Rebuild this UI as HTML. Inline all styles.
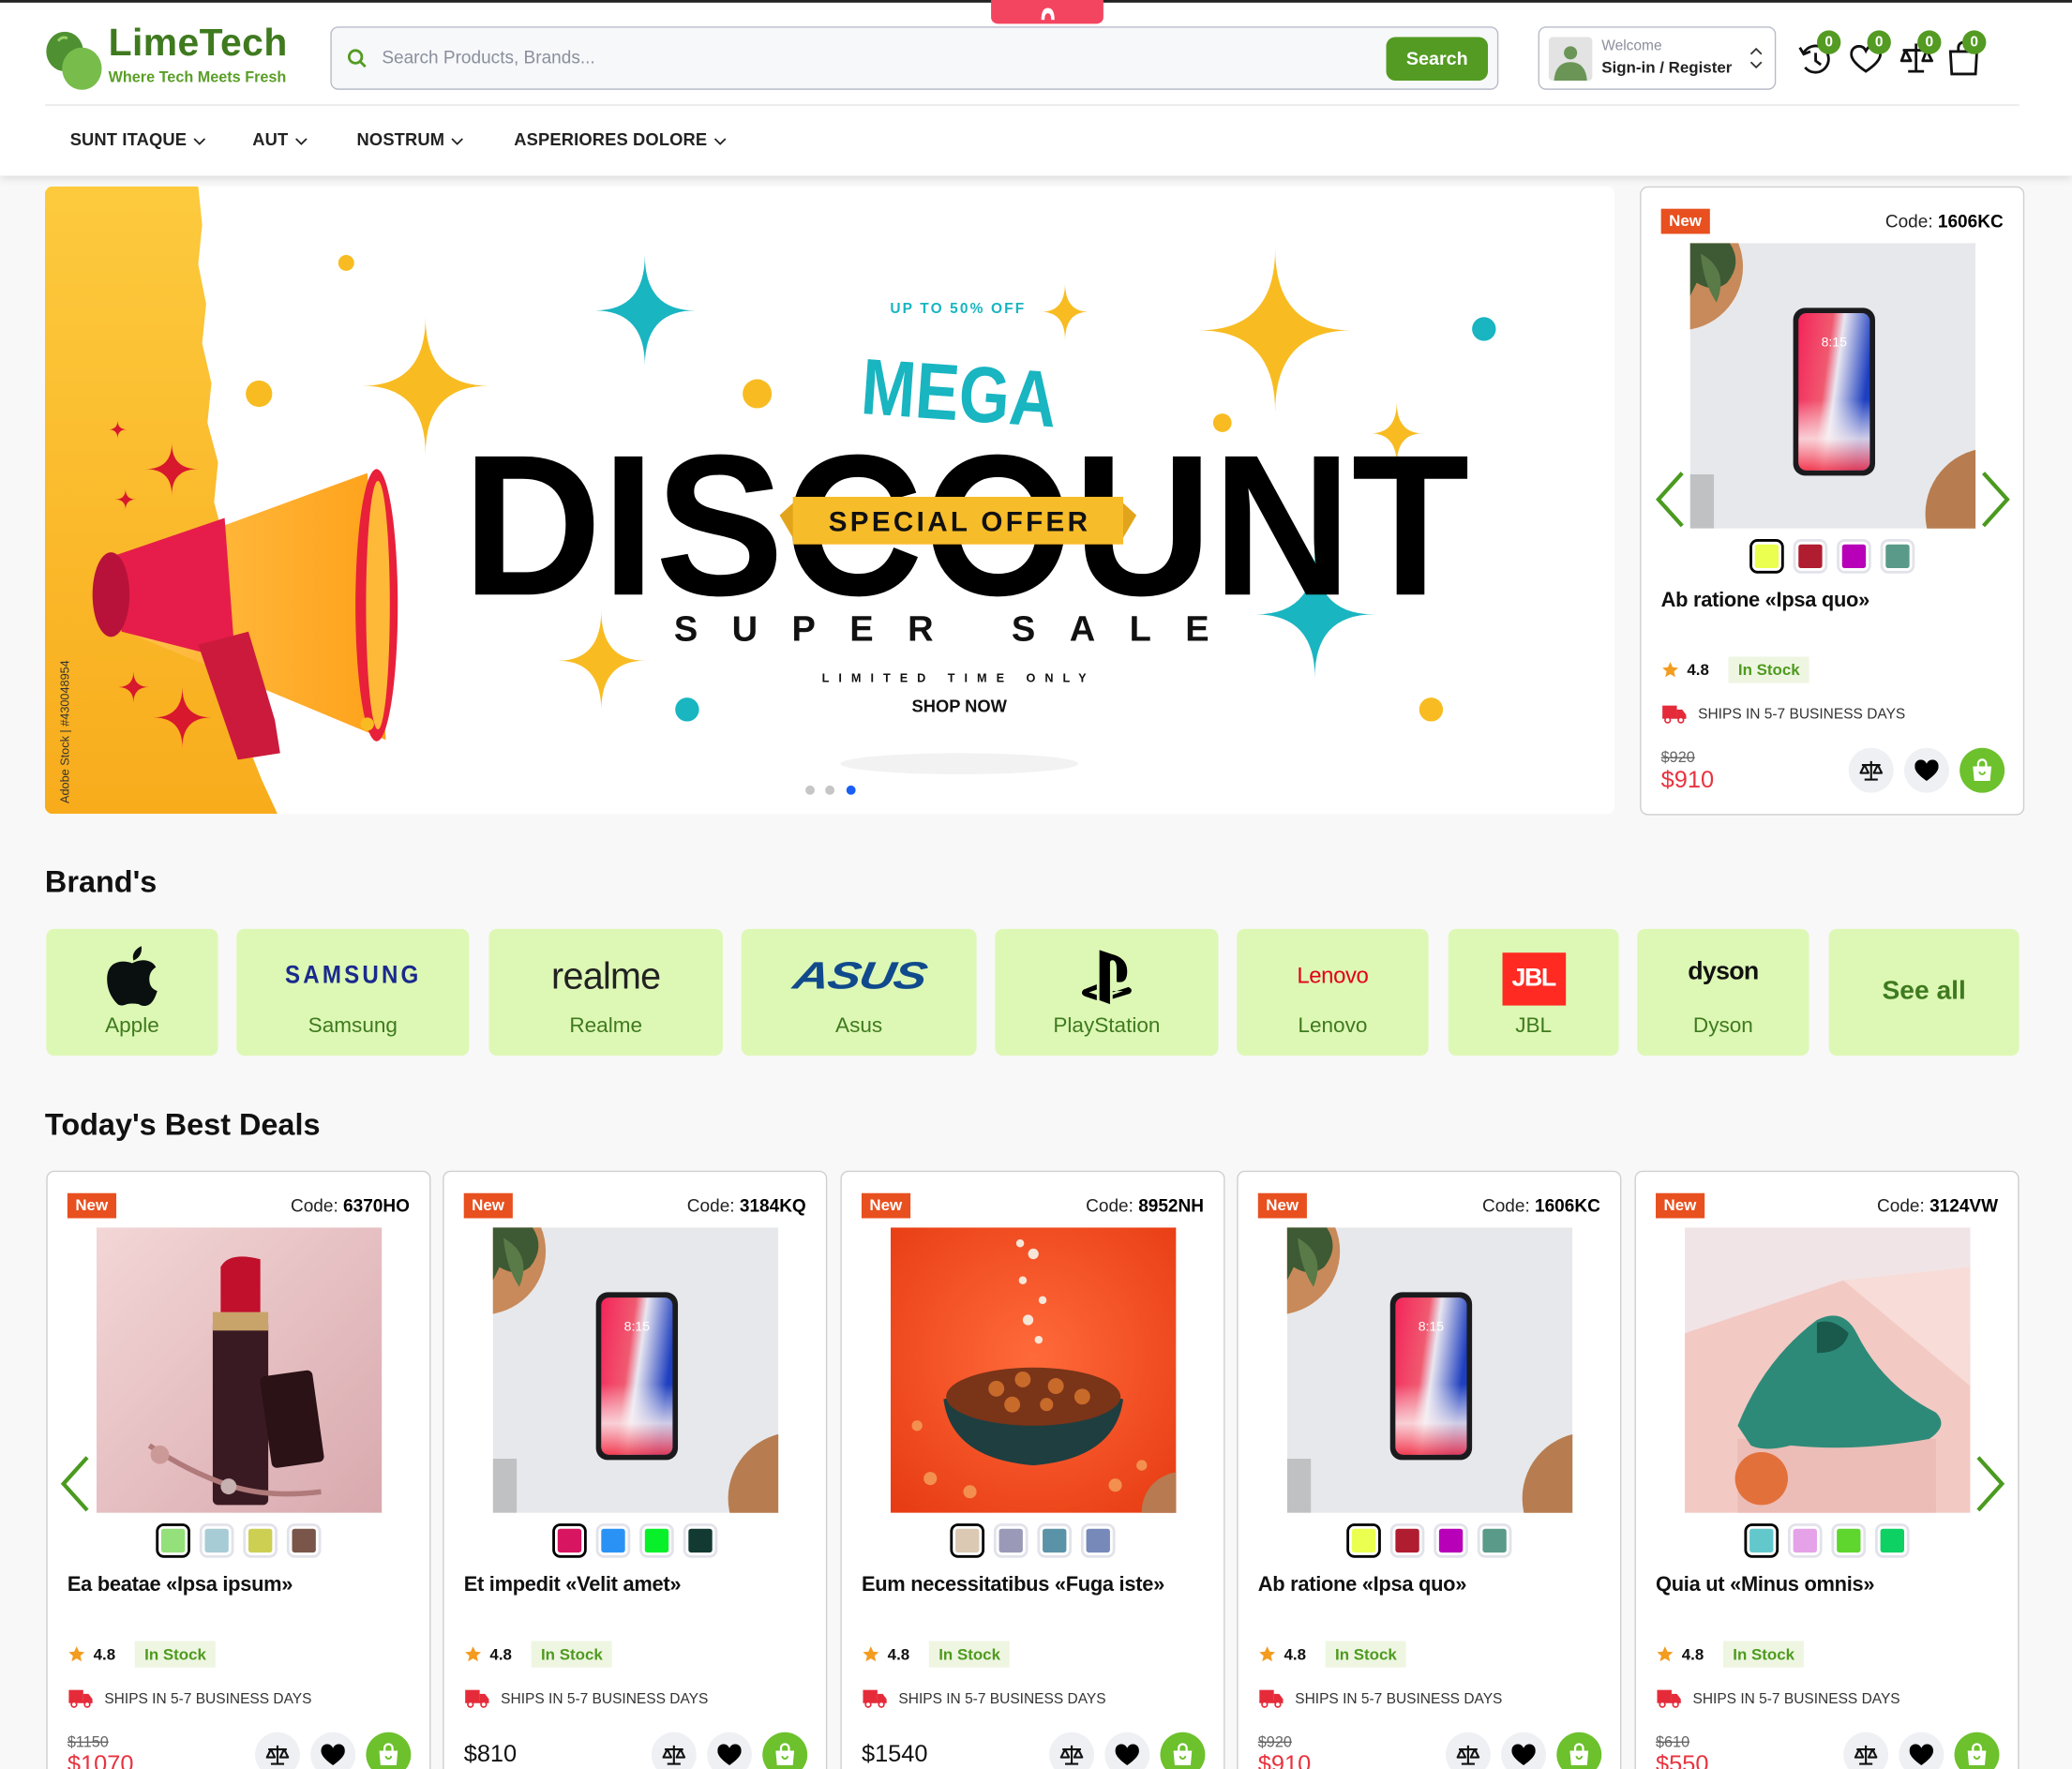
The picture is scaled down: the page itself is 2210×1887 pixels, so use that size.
<!DOCTYPE html>
<html><head><meta charset="utf-8">
<style>
*{margin:0;padding:0;box-sizing:border-box}
html,body{width:2210px;height:1886px;overflow:hidden;background:#f8f8f8;font-family:"Liberation Sans",sans-serif;color:#111}
#w{position:absolute;left:0;top:0;width:1568px;height:1339px;transform:scale(1.409439);transform-origin:0 0;overflow:hidden}
.a{position:absolute}
.nav{position:absolute;top:98px;font-size:13px;font-weight:bold;color:#222;letter-spacing:.1px}
.nav svg{margin-left:5px;vertical-align:middle}
.badge{position:absolute;width:18px;height:18px;border-radius:9px;background:#539b22;color:#fff;font-size:11px;font-weight:bold;text-align:center;line-height:18px}
.brand{position:absolute;top:703px;height:96px;background:#ddf8b5;border-radius:6px}
.brand .lb{position:absolute;left:0;right:0;top:65px;text-align:center;font-size:16px;color:#3f7a1f}
.brand .lg{position:absolute;left:0;right:0;top:14px;height:44px;display:flex;align-items:center;justify-content:center}
.card{position:absolute;background:#fff;border:1px solid #cfcfcf;border-radius:6px;width:291px;height:476px}
.new{position:absolute;left:15px;top:16px;background:#e8501f;color:#fff;font-size:12px;font-weight:bold;height:19px;line-height:19px;padding:0 6px}
.code{position:absolute;right:15px;top:16px;font-size:13.5px;line-height:19px;color:#222}
.code b{color:#000}
.img{position:absolute;left:37px;top:42px;width:216px;height:216px;overflow:hidden}
.sw{position:absolute;top:266px;left:82px;display:flex;gap:7px}
.sw span{width:26px;height:26px;border:2px solid #e2e3ea;border-radius:6px;padding:2px;background-clip:content-box}
.sw span.s{border-color:#000}
.tt{position:absolute;left:15px;top:304px;font-size:15.5px;font-weight:bold;color:#111;letter-spacing:-.2px}
.rt{position:absolute;left:16px;top:355px;display:flex;align-items:center;font-size:12px;font-weight:bold}
.rt .st{margin-left:8px;margin-left:15px;background:#eef6e2;color:#4f9a1e;padding:3px 7px}
.sh{position:absolute;left:16px;top:391px;display:flex;align-items:center;font-size:11px;color:#333}
.sh svg{margin-right:9px}
.po{position:absolute;left:15px;top:426px;font-size:11.5px;color:#666;text-decoration:line-through}
.pn{position:absolute;left:15px;top:438px;font-size:18px;color:#e8333f}
.pb{position:absolute;left:15px;top:430px;font-size:18px;color:#111}
.bt{position:absolute;top:424px;width:34px;height:34px;border-radius:17px;background:#eef0f3;display:flex;align-items:center;justify-content:center}
.bt.g{background:#6cc12c}
.arr{position:absolute}
</style></head><body>
<svg width="0" height="0" style="position:absolute">
<defs>
<linearGradient id="scr" x1="0" y1="0" x2="1" y2="0.3"><stop offset="0" stop-color="#f4245a"/><stop offset="0.45" stop-color="#f05a70"/><stop offset="0.6" stop-color="#e9e6f0"/><stop offset="1" stop-color="#1e3fbf"/></linearGradient>
<linearGradient id="scr2" x1="0" y1="0" x2="0" y2="1"><stop offset="0" stop-color="#fff" stop-opacity="0"/><stop offset="0.55" stop-color="#fff" stop-opacity=".0"/><stop offset="0.8" stop-color="#fbeff0" stop-opacity=".8"/><stop offset="1" stop-color="#f23a50" stop-opacity=".9"/></linearGradient>
<linearGradient id="ylw" x1="0" y1="0" x2="0" y2="1"><stop offset="0" stop-color="#fdca3e"/><stop offset="1" stop-color="#f8ac1c"/></linearGradient>
<linearGradient id="horn" x1="0" y1="0" x2="1" y2="0"><stop offset="0" stop-color="#ffc24a"/><stop offset="1" stop-color="#ffa11a"/></linearGradient>
<linearGradient id="lip" x1="0" y1="0" x2="1" y2="1"><stop offset="0" stop-color="#f3d6d6"/><stop offset="1" stop-color="#d8a9ae"/></linearGradient>
<radialGradient id="cer" cx="0.5" cy="0.45" r="0.7"><stop offset="0" stop-color="#ff6a3a"/><stop offset="1" stop-color="#e83d14"/></radialGradient>
<g id="phone">
<rect width="216" height="216" fill="#e7e8eb"/>
<circle cx="-8" cy="18" r="48" fill="#c88a5a"/>
<path d="M0 0 L30 0 Q40 15 28 30 Q18 38 5 30 L0 40Z" fill="#3d5a34"/>
<path d="M8 8 Q30 20 20 45 Q10 30 8 8Z" fill="#5a7a48"/>
<circle cx="228" cy="205" r="50" fill="#b77d50"/>
<rect x="0" y="175" width="18" height="41" fill="#9a9a9c" opacity=".5"/>
<rect x="78" y="49" width="62" height="127" rx="9" fill="#1b1b1e"/>
<rect x="82" y="53" width="54" height="119" rx="6" fill="url(#scr)"/>
<rect x="82" y="53" width="54" height="119" rx="6" fill="url(#scr2)"/>
<text x="109" y="78" font-size="10" fill="#fff" text-anchor="middle" font-family="Liberation Sans">8:15</text>
</g>
<g id="scale"><path d="M9 2v14M4 16h10M2 5h14M4 5l-3 6h6zM14 5l-3 6h6z" fill="none" stroke="#111" stroke-width="1.5" stroke-linejoin="round"/></g>
<g id="hrt"><path d="M9 16 C2 11 0 8 0 5 C0 2 2 0 4.5 0 C6.5 0 8 1 9 3 C10 1 11.5 0 13.5 0 C16 0 18 2 18 5 C18 8 16 11 9 16Z" fill="#000"/></g>
<g id="bag"><path d="M1 6h14l-1 11H2z" fill="#fff"/><path d="M5 6V4a3 3 0 0 1 6 0v2" stroke="#fff" stroke-width="1.6" fill="none"/><path d="M6 10a2 2 0 0 0 4 0" stroke="#6cc12c" stroke-width="1.4" fill="none"/></g>
<g id="truck"><rect x="0" y="1" width="11" height="9" fill="#e52b3a"/><path d="M11 4h4l3 4v3h-7z" fill="#e52b3a"/><rect x="0" y="9" width="18" height="2" fill="#e52b3a"/><circle cx="4" cy="12" r="2" fill="#fff" stroke="#e52b3a" stroke-width="1.2"/><circle cx="14" cy="12" r="2" fill="#fff" stroke="#e52b3a" stroke-width="1.2"/></g>
<g id="star"><path d="M6 0l1.8 4 4.2.4-3.2 2.8 1 4.2L6 9.2 2.2 11.4l1-4.2L0 4.4 4.2 4z" fill="#f39c1f"/></g>
</defs></svg>

<div id="w">
<!-- header -->
<div class="a" style="left:0;top:0;width:1568px;height:133px;background:#fff;box-shadow:0 2px 6px rgba(0,0,0,.12)"></div>
<div class="a" style="left:0;top:0;width:1568px;height:2px;background:#222"></div>
<div class="a" style="left:750px;top:0;width:85px;height:18px;background:#f44560;border-radius:0 0 5px 5px"></div>
<svg class="a" style="left:786px;top:4px" width="14" height="12"><path d="M2 11 Q2 2 7 2 Q12 2 12 11 L9.5 11 Q9.5 6 7 6 Q4.5 6 4.5 11Z" fill="#fff"/></svg>

<svg class="a" style="left:33px;top:22px" width="46" height="46">
<ellipse cx="16" cy="17" rx="14" ry="15" fill="#4f9132"/>
<ellipse cx="29" cy="30" rx="15" ry="16" fill="#78bc4c"/>
<path d="M11 9 Q14 5 18 7" stroke="#9ad36a" stroke-width="2" fill="none"/>
</svg>
<div class="a" style="left:82px;top:17px;font-size:29px;font-weight:bold;color:#3f7a1f;letter-spacing:.3px">LimeTech</div>
<div class="a" style="left:82px;top:53px;font-size:11.5px;color:#5a9e27;font-weight:bold">Where Tech Meets Fresh</div>

<div class="a" style="left:250px;top:20px;width:884px;height:48px;border:1px solid #b9bcc9;border-radius:6px;background:#f7f8fa"></div>
<svg class="a" style="left:263px;top:37px" width="15" height="15"><circle cx="6" cy="6" r="4.8" stroke="#539b22" stroke-width="2" fill="none"/><path d="M9.5 9.5l4 4" stroke="#539b22" stroke-width="2"/></svg>
<div class="a" style="left:289px;top:36px;font-size:13.5px;color:#8a8f9c">Search Products, Brands...</div>
<div class="a" style="left:1049px;top:28px;width:77px;height:33px;background:#539b22;border-radius:7px;color:#fff;font-size:14px;font-weight:bold;text-align:center;line-height:33px">Search</div>

<div class="a" style="left:1164px;top:20px;width:180px;height:48px;border:1px solid #b9bcc9;border-radius:6px;background:#fff"></div>
<div class="a" style="left:1172px;top:28px;width:33px;height:33px;background:#e3e3e3;border-radius:3px;overflow:hidden">
<svg width="33" height="33"><circle cx="16.5" cy="12" r="5" fill="#6b9557"/><path d="M4 33 Q5 19 16.5 19 Q28 19 29 33Z" fill="#6b9557"/></svg></div>
<div class="a" style="left:1212px;top:29px;font-size:11px;color:#8a8f9c">Welcome</div>
<div class="a" style="left:1212px;top:44px;font-size:12px;font-weight:bold;color:#222">Sign-in / Register</div>
<svg class="a" style="left:1323px;top:36px" width="12" height="16"><path d="M2 5l4-4 4 4M2 11l4 4 4-4" stroke="#333" stroke-width="1.3" fill="none"/></svg>

<svg class="a" style="left:1361px;top:32px" width="26" height="26"><path d="M4 8 A10 10 0 1 1 5 19" stroke="#111" stroke-width="2" fill="none"/><path d="M1 4l3 5 5-2" stroke="#111" stroke-width="2" fill="none"/><path d="M13 8v6l4 3" stroke="#111" stroke-width="2" fill="none"/></svg>
<svg class="a" style="left:1400px;top:34px" width="24" height="22"><path d="M12 20 C3 14 1 10 1 7 C1 3 4 1 7 1 C9.5 1 11 2.5 12 4.5 C13 2.5 14.5 1 17 1 C20 1 23 3 23 7 C23 10 21 14 12 20Z" stroke="#111" stroke-width="2" fill="none"/></svg>
<svg class="a" style="left:1437px;top:31px" width="26" height="26"><path d="M13 2v21M7 23h12M3 7h20M5 7l-3 8h7zM21 7l-3 8h7z" stroke="#111" stroke-width="2" fill="none" stroke-linejoin="round"/></svg>
<svg class="a" style="left:1474px;top:30px" width="24" height="28"><path d="M2 9h20l-1 17H3z" stroke="#111" stroke-width="2" fill="none"/><path d="M8 9V6a4 4 0 0 1 8 0v3" stroke="#111" stroke-width="2" fill="none"/></svg>
<div class="badge" style="left:1375px;top:23px">0</div>
<div class="badge" style="left:1413px;top:23px">0</div>
<div class="badge" style="left:1451px;top:23px">0</div>
<div class="badge" style="left:1485px;top:23px">0</div>

<div class="a" style="left:34px;top:79px;width:1494px;height:1px;background:#e5e5e5"></div>
<div class="nav" style="left:53px">SUNT ITAQUE<svg width="10" height="6"><path d="M1 1l4 4 4-4" stroke="#222" stroke-width="1.3" fill="none"/></svg></div>
<div class="nav" style="left:191px">AUT<svg width="10" height="6"><path d="M1 1l4 4 4-4" stroke="#222" stroke-width="1.3" fill="none"/></svg></div>
<div class="nav" style="left:270px">NOSTRUM<svg width="10" height="6"><path d="M1 1l4 4 4-4" stroke="#222" stroke-width="1.3" fill="none"/></svg></div>
<div class="nav" style="left:389px">ASPERIORES DOLORE<svg width="10" height="6"><path d="M1 1l4 4 4-4" stroke="#222" stroke-width="1.3" fill="none"/></svg></div>

<!-- banner -->
<div class="a" style="left:34px;top:141px;width:1188px;height:475px;background:#fff;border-radius:6px;overflow:hidden">
<svg width="1188" height="475" viewBox="34 141 1188 475" font-family="Liberation Sans">
<polygon points="34,141 150,141 153,170 150,200 156,230 153,260 160,290 157,320 165,350 162,380 170,410 168,440 178,470 176,500 186,530 186,560 198,590 210,616 34,616" fill="url(#ylw)"/>
<g fill="#d8182c">
<path d="M130 335 Q130 355 150 355 Q130 355 130 375 Q130 355 110 355 Q130 355 130 335Z"/>
<path d="M95 370 Q95 378 103 378 Q95 378 95 386 Q95 378 87 378 Q95 378 95 370Z"/>
<path d="M89 318 Q89 325 96 325 Q89 325 89 332 Q89 325 82 325 Q89 325 89 318Z"/>
<path d="M101 508 Q101 520 113 520 Q101 520 101 532 Q101 520 89 520 Q101 520 101 508Z"/>
<path d="M138 520 Q138 543 160 543 Q138 543 138 566 Q138 543 116 543 Q138 543 138 520Z"/>
</g>
<text x="52" y="608" font-size="9" fill="#333" transform="rotate(-90 52 608)">Adobe Stock | #430048954</text>
<!-- megaphone -->
<polygon points="95,425 278,358 292,560 100,480" fill="url(#horn)"/>
<ellipse cx="285" cy="458" rx="16" ry="103" fill="#e8203a"/>
<ellipse cx="286" cy="458" rx="9" ry="94" fill="#ffb938"/>
<polygon points="88,420 170,392 178,500 92,478" fill="#e61d4a"/>
<ellipse cx="84" cy="450" rx="14" ry="32" fill="#b8123a"/>
<polygon points="150,488 188,478 208,545 212,570 180,575" fill="#cc1a3c"/>
<!-- stars -->
<g fill="#f8bc22">
<path d="M322 240 Q322 292 370 292 Q322 292 322 344 Q322 292 274 292 Q322 292 322 240Z"/>
<path d="M965 188 Q965 250 1023 250 Q965 250 965 312 Q965 250 907 250 Q965 250 965 188Z"/>
<path d="M455 462 Q455 500 488 500 Q455 500 455 538 Q455 500 422 500 Q455 500 455 462Z"/>
<path d="M806 214 Q806 236 824 236 Q806 236 806 258 Q806 236 788 236 Q806 236 806 214Z"/>
<path d="M1057 304 Q1057 328 1077 328 Q1057 328 1057 352 Q1057 328 1037 328 Q1057 328 1057 304Z"/>
<circle cx="262" cy="199" r="6"/><circle cx="196" cy="298" r="10"/><circle cx="573" cy="298" r="11"/><circle cx="925" cy="320" r="7"/><circle cx="1083" cy="537" r="9"/><circle cx="278" cy="548" r="5"/>
</g>
<g fill="#19b5c1">
<path d="M488 193 Q488 235 526 235 Q488 235 488 277 Q488 235 450 235 Q488 235 488 193Z"/>
<path d="M995 417 Q995 465 1040 465 Q995 465 995 513 Q995 465 950 465 Q995 465 995 417Z"/>
<circle cx="1123" cy="249" r="9"/><circle cx="520" cy="537" r="9"/>
</g>
<text x="725" y="237" font-size="11" font-weight="bold" fill="#19b5c1" text-anchor="middle" letter-spacing="1.5">UP TO 50% OFF</text>
<text x="652" y="318" font-size="60" font-weight="bold" fill="#19b5c1" textLength="148" lengthAdjust="spacingAndGlyphs" transform="rotate(4 725 295)">MEGA</text>
<text x="350" y="450" font-size="152" font-weight="bold" fill="#000" textLength="762" lengthAdjust="spacingAndGlyphs">DISCOUNT</text>
<polygon points="590,390 603,378 603,412" fill="#e2a41a"/><polygon points="860,390 847,378 847,412" fill="#e2a41a"/>
<rect x="600" y="376" width="250" height="36" fill="#f7bc2a"/>
<text x="725" y="402" font-size="21" font-weight="bold" fill="#111" text-anchor="middle" textLength="196" lengthAdjust="spacing">SPECIAL OFFER</text>
<text x="510" y="485" font-size="27" font-weight="bold" fill="#111" textLength="405" lengthAdjust="spacing">SUPER SALE</text>
<text x="622" y="516" font-size="9" font-weight="bold" fill="#111" textLength="200" lengthAdjust="spacing">LIMITED TIME ONLY</text>
<text x="726" y="539" font-size="13" font-weight="bold" fill="#111" text-anchor="middle">SHOP NOW</text>
<ellipse cx="726" cy="578" rx="90" ry="8" fill="#000" opacity=".05"/>
<circle cx="613" cy="598" r="3.5" fill="#c6c6c6"/><circle cx="628" cy="598" r="3.5" fill="#c6c6c6"/><circle cx="644" cy="598" r="3.5" fill="#1a5ff5"/>
</svg>
</div>

<!-- side card -->
<div class="card" style="left:1241px;top:141px">
<div class="new">New</div><div class="code">Code: <b>1606KC</b></div>
<svg class="img" viewBox="0 0 216 216"><use href="#phone"/></svg>
<div class="sw"><span class="s" style="background-color:#eaff4f"></span><span style="background-color:#b01c30"></span><span style="background-color:#b800b8"></span><span style="background-color:#5a9a88"></span></div>
<div class="tt">Ab ratione «Ipsa quo»</div>
<div class="rt"><svg width="12" height="12"><use href="#star"/></svg>&nbsp;&nbsp;4.8<span class="st">In Stock</span></div>
<div class="sh"><svg width="18" height="15"><use href="#truck"/></svg>SHIPS IN 5-7 BUSINESS DAYS</div>
<div class="po">$920</div><div class="pn">$910</div>
<div class="bt" style="left:157px"><svg width="18" height="18"><use href="#scale"/></svg></div>
<div class="bt" style="left:199px"><svg width="18" height="17"><use href="#hrt"/></svg></div>
<div class="bt g" style="left:241px"><svg width="16" height="18"><use href="#bag"/></svg></div>
</div>
<svg class="arr" style="left:1252px;top:356px" width="24" height="44"><path d="M21 2L3 22l18 20" stroke="#4a9a1f" stroke-width="3" fill="none"/></svg>
<svg class="arr" style="left:1498px;top:356px" width="24" height="44"><path d="M3 2l18 20L3 42" stroke="#4a9a1f" stroke-width="3" fill="none"/></svg>

<!-- brands -->
<div class="a" style="left:34px;top:654px;font-size:23px;font-weight:bold;color:#111">Brand's</div>
<div class="brand" style="left:35px;width:130px"><div class="lg"><svg width="40" height="46" viewBox="0 0 40 46"><path d="M27 0 Q28 8 21 11 Q19 4 27 0Z" fill="#0a0f0f"/><path d="M20 13 Q26 10 31 11 Q36 12 38 16 Q33 19 33 25 Q33 32 39 34 Q36 44 31 45 Q28 46 25 44 Q20 43 16 44 Q12 46 9 44 Q1 36 1 25 Q1 14 10 12 Q15 11 20 13Z" fill="#0a0f0f"/></svg></div><div class="lb">Apple</div></div>
<div class="brand" style="left:179px;width:176px"><div class="lg"><span style="font-size:19px;font-weight:bold;color:#1a2a8c;letter-spacing:2.5px;transform:scaleX(.9);display:inline-block">SAMSUNG</span></div><div class="lb">Samsung</div></div>
<div class="brand" style="left:370px;width:177px"><div class="lg"><span style="font-size:28px;color:#222;letter-spacing:-.5px">realme</span></div><div class="lb">Realme</div></div>
<div class="brand" style="left:561px;width:178px"><div class="lg"><span style="font-size:29px;font-weight:bold;font-style:italic;color:#104a8c;letter-spacing:-1px;transform:skewX(-10deg) scaleX(1.3);display:inline-block">ASUS</span></div><div class="lb">Asus</div></div>
<div class="brand" style="left:753px;width:169px"><div class="lg"><svg width="40" height="44" viewBox="0 0 40 44"><path d="M14 2 L14 40 L22 43 L22 12 Q22 9 25 10 Q27 11 27 16 L27 26 Q35 28 35 18 Q35 8 23 5Z" fill="#000"/><path d="M12 28 L2 32 Q-1 35 3 37 L12 40 L12 36 L6 34 L12 32Z" fill="#000"/><path d="M24 34 L36 30 Q40 32 37 35 L24 39 L24 36 L32 33 L24 33Z" fill="#000"/></svg></div><div class="lb">PlayStation</div></div>
<div class="brand" style="left:936px;width:145px"><div class="lg"><span style="font-size:17px;color:#e2001a;letter-spacing:-.3px">Lenovo</span></div><div class="lb">Lenovo</div></div>
<div class="brand" style="left:1096px;width:129px"><div class="lg"><div style="width:48px;height:40px;margin-top:4px;background:#ff2a22;color:#fff;font-weight:bold;font-size:19px;text-align:center;line-height:40px;letter-spacing:-1px">JBL</div></div><div class="lb">JBL</div></div>
<div class="brand" style="left:1239px;width:130px"><div class="lg"><span style="font-size:19px;font-weight:bold;color:#111;letter-spacing:-.5px;margin-top:-6px">dyson</span></div><div class="lb">Dyson</div></div>
<div class="brand" style="left:1384px;width:144px"><div style="position:absolute;left:0;right:0;top:36px;text-align:center;font-size:20px;color:#3f7a1f;font-weight:bold">See all</div></div>

<div class="a" style="left:34px;top:838px;font-size:23px;font-weight:bold;color:#111">Today's Best Deals</div>

<!-- cards -->
<div class="card" style="left:35px;top:886px">
<div class="new">New</div><div class="code">Code: <b>6370HO</b></div>
<svg class="img" viewBox="0 0 216 216"><rect width="216" height="216" fill="url(#lip)"/><rect x="88" y="70" width="42" height="140" rx="4" fill="#3a1a22"/><rect x="88" y="64" width="42" height="14" fill="#c9a46a"/><path d="M94 64 L94 30 Q100 18 124 24 L124 64Z" fill="#c0102c"/><rect x="128" y="110" width="40" height="70" rx="4" fill="#2a1216" transform="rotate(-8 148 145)"/><g fill="none" stroke="#b07a7a" stroke-width="4"><path d="M40 165 Q70 185 100 195 Q130 205 170 200"/></g><circle cx="48" cy="172" r="7" fill="#c99"/><circle cx="100" cy="196" r="6" fill="#c6b0b0"/></svg>
<div class="sw"><span class="s" style="background-color:#94e07a"></span><span style="background-color:#a8ccd6"></span><span style="background-color:#cccf52"></span><span style="background-color:#7a554a"></span></div>
<div class="tt">Ea beatae «Ipsa ipsum»</div>
<div class="rt"><svg width="12" height="12"><use href="#star"/></svg>&nbsp;&nbsp;4.8<span class="st">In Stock</span></div>
<div class="sh"><svg width="18" height="15"><use href="#truck"/></svg>SHIPS IN 5-7 BUSINESS DAYS</div>
<div class="po">$1150</div><div class="pn">$1070</div>
<div class="bt" style="left:157px"><svg width="18" height="18"><use href="#scale"/></svg></div>
<div class="bt" style="left:199px"><svg width="18" height="17"><use href="#hrt"/></svg></div>
<div class="bt g" style="left:241px"><svg width="16" height="18"><use href="#bag"/></svg></div>
</div>

<div class="card" style="left:335px;top:886px">
<div class="new">New</div><div class="code">Code: <b>3184KQ</b></div>
<svg class="img" viewBox="0 0 216 216"><use href="#phone"/></svg>
<div class="sw"><span class="s" style="background-color:#d81560"></span><span style="background-color:#2a92f5"></span><span style="background-color:#07f02a"></span><span style="background-color:#123a32"></span></div>
<div class="tt">Et impedit «Velit amet»</div>
<div class="rt"><svg width="12" height="12"><use href="#star"/></svg>&nbsp;&nbsp;4.8<span class="st">In Stock</span></div>
<div class="sh"><svg width="18" height="15"><use href="#truck"/></svg>SHIPS IN 5-7 BUSINESS DAYS</div>
<div class="pb">$810</div>
<div class="bt" style="left:157px"><svg width="18" height="18"><use href="#scale"/></svg></div>
<div class="bt" style="left:199px"><svg width="18" height="17"><use href="#hrt"/></svg></div>
<div class="bt g" style="left:241px"><svg width="16" height="18"><use href="#bag"/></svg></div>
</div>

<div class="card" style="left:636px;top:886px">
<div class="new">New</div><div class="code">Code: <b>8952NH</b></div>
<svg class="img" viewBox="0 0 216 216"><rect width="216" height="216" fill="url(#cer)"/><g fill="#f6e6d8"><circle cx="108" cy="20" r="4"/><circle cx="100" cy="40" r="3"/><circle cx="115" cy="55" r="3"/><circle cx="104" cy="70" r="4"/><circle cx="112" cy="85" r="3"/><circle cx="98" cy="12" r="3"/></g><path d="M40 130 Q108 110 176 130 Q170 175 108 180 Q46 175 40 130Z" fill="#1f3e40"/><ellipse cx="108" cy="128" rx="66" ry="22" fill="#7a3418"/><g fill="#c86a2a"><circle cx="80" cy="122" r="6"/><circle cx="100" cy="115" r="6"/><circle cx="125" cy="120" r="6"/><circle cx="145" cy="128" r="6"/><circle cx="92" cy="134" r="6"/><circle cx="118" cy="134" r="5"/></g><g fill="#f39050"><circle cx="30" cy="190" r="5"/><circle cx="60" cy="200" r="5"/><circle cx="170" cy="195" r="5"/><circle cx="190" cy="180" r="4"/><circle cx="20" cy="150" r="4"/></g><circle cx="220" cy="215" r="30" fill="#b87a50"/></svg>
<div class="sw"><span class="s" style="background-color:#dbc9b4"></span><span style="background-color:#9a9ab8"></span><span style="background-color:#5a93a8"></span><span style="background-color:#7689b9"></span></div>
<div class="tt">Eum necessitatibus «Fuga iste»</div>
<div class="rt"><svg width="12" height="12"><use href="#star"/></svg>&nbsp;&nbsp;4.8<span class="st">In Stock</span></div>
<div class="sh"><svg width="18" height="15"><use href="#truck"/></svg>SHIPS IN 5-7 BUSINESS DAYS</div>
<div class="pb">$1540</div>
<div class="bt" style="left:157px"><svg width="18" height="18"><use href="#scale"/></svg></div>
<div class="bt" style="left:199px"><svg width="18" height="17"><use href="#hrt"/></svg></div>
<div class="bt g" style="left:241px"><svg width="16" height="18"><use href="#bag"/></svg></div>
</div>

<div class="card" style="left:936px;top:886px">
<div class="new">New</div><div class="code">Code: <b>1606KC</b></div>
<svg class="img" viewBox="0 0 216 216"><use href="#phone"/></svg>
<div class="sw"><span class="s" style="background-color:#eaff4f"></span><span style="background-color:#b01c30"></span><span style="background-color:#b800b8"></span><span style="background-color:#5a9a88"></span></div>
<div class="tt">Ab ratione «Ipsa quo»</div>
<div class="rt"><svg width="12" height="12"><use href="#star"/></svg>&nbsp;&nbsp;4.8<span class="st">In Stock</span></div>
<div class="sh"><svg width="18" height="15"><use href="#truck"/></svg>SHIPS IN 5-7 BUSINESS DAYS</div>
<div class="po">$920</div><div class="pn">$910</div>
<div class="bt" style="left:157px"><svg width="18" height="18"><use href="#scale"/></svg></div>
<div class="bt" style="left:199px"><svg width="18" height="17"><use href="#hrt"/></svg></div>
<div class="bt g" style="left:241px"><svg width="16" height="18"><use href="#bag"/></svg></div>
</div>

<div class="card" style="left:1237px;top:886px">
<div class="new">New</div><div class="code">Code: <b>3124VW</b></div>
<svg class="img" viewBox="0 0 216 216"><rect width="216" height="216" fill="#f1e4e6"/><polygon points="0,80 120,40 216,90 216,216 0,216" fill="#f3c9c4"/><polygon points="120,40 216,30 216,120" fill="#f7dcd8"/><rect x="40" y="160" width="150" height="56" fill="#ecbcb6"/><circle cx="58" cy="190" r="20" fill="#e2703a"/><path d="M40 150 Q60 100 100 70 Q120 60 130 80 Q150 120 190 140 Q200 150 185 160 Q130 170 80 165 Q60 170 50 165Z" fill="#2e8a78"/><path d="M100 72 Q112 68 124 80 Q120 95 100 95Z" fill="#1a5a4c"/></svg>
<div class="sw"><span class="s" style="background-color:#63c8cc"></span><span style="background-color:#e5a2e8"></span><span style="background-color:#5fd62e"></span><span style="background-color:#0ed163"></span></div>
<div class="tt">Quia ut «Minus omnis»</div>
<div class="rt"><svg width="12" height="12"><use href="#star"/></svg>&nbsp;&nbsp;4.8<span class="st">In Stock</span></div>
<div class="sh"><svg width="18" height="15"><use href="#truck"/></svg>SHIPS IN 5-7 BUSINESS DAYS</div>
<div class="po">$610</div><div class="pn">$550</div>
<div class="bt" style="left:157px"><svg width="18" height="18"><use href="#scale"/></svg></div>
<div class="bt" style="left:199px"><svg width="18" height="17"><use href="#hrt"/></svg></div>
<div class="bt g" style="left:241px"><svg width="16" height="18"><use href="#bag"/></svg></div>
</div>
<svg class="arr" style="left:45px;top:1101px" width="24" height="44"><path d="M21 2L3 22l18 20" stroke="#4a9a1f" stroke-width="3" fill="none"/></svg>
<svg class="arr" style="left:1494px;top:1101px" width="24" height="44"><path d="M3 2l18 20L3 42" stroke="#4a9a1f" stroke-width="3" fill="none"/></svg>
</div>
</body></html>
